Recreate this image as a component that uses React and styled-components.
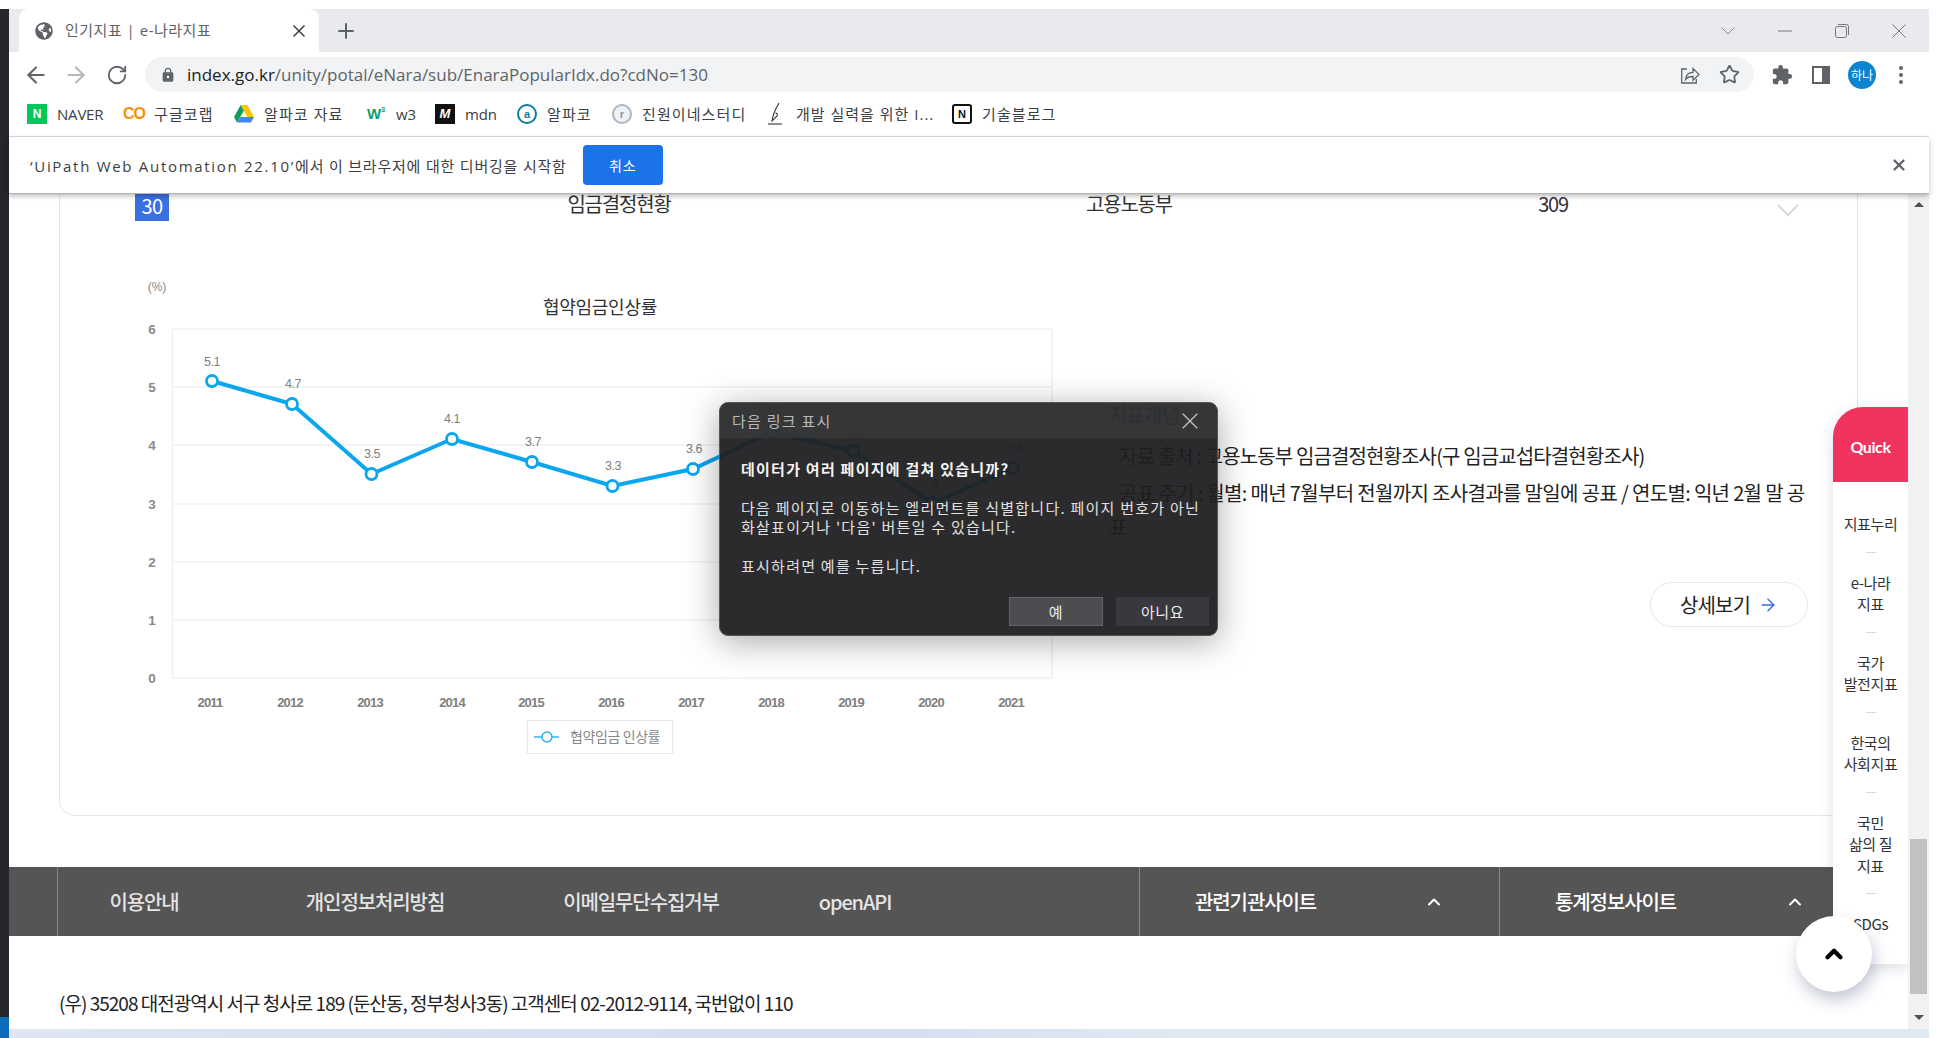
import React from "react";
import styled, { createGlobalStyle } from "styled-components";
import { ArrowLeft, ArrowRight, RotateCw, Star, Plus, X, ChevronUp } from "lucide-react";
import { FaGlobeAmericas } from "react-icons/fa";
import { MdExtension, MdLock } from "react-icons/md";

const GlobalStyle = createGlobalStyle`
  html, body { margin: 0; padding: 0; background: #fff; }
  * { box-sizing: border-box; }
  body { font-family: "Noto Sans", "Noto Sans CJK KR", sans-serif; }
`;

const UI_FONT = `"Open Sans", "Noto Sans CJK KR", sans-serif`;
const PAGE_FONT = `"Noto Sans CJK KR", sans-serif`;

const Screen = styled.div`
  position: relative;
  width: 1938px;
  height: 1038px;
  overflow: hidden;
  background: #fff;
  display: grid;
  grid-template-columns: 9px 1920px 9px;
  padding-top: 9px;
`;

const DesktopEdge = styled.div`
  display: flex;
  flex-direction: column;
  justify-content: flex-end;
  background: #25262a;
  & > div {
    height: 21px;
    background: #0f6cbd;
  }
`;

const Browser = styled.div`
  display: flex;
  flex-direction: column;
  height: 1029px;
`;

const TabStrip = styled.div`
  height: 43px;
  flex: none;
  background: #e8eaed;
  display: flex;
  align-items: stretch;
  padding-left: 10px;
`;

const Tab = styled.div`
  width: 300px;
  background: #fff;
  border-radius: 9px 9px 0 0;
  display: flex;
  align-items: center;
  padding: 0 10px 0 16px;
  color: #5f6368;
  font: 15px ${UI_FONT};
  letter-spacing: 0.5px;
  & > span {
    flex: 1;
    margin-left: 12px;
    margin-top: -3px;
  }
`;

const NewTab = styled.div`
  width: 54px;
  display: flex;
  align-items: center;
  justify-content: center;
  color: #5f6368;
`;

const WindowControls = styled.div`
  margin-left: auto;
  display: flex;
  align-items: center;
  color: #6f7378;
  padding-right: 23px;
  & > svg { margin-left: 43px; }
`;

const Toolbar = styled.div`
  height: 40px;
  flex: none;
  display: flex;
  align-items: flex-start;
  padding: 5px 0 0 18px;
  background: #fff;
`;

const NavIcon = styled.div`
  width: 18px;
  height: 35px;
  display: flex;
  align-items: center;
  justify-content: center;
  margin-right: ${(p) => p.$gap}px;
  color: ${(p) => p.$color || "#5f6368"};
  & > svg { flex: none; }
`;

const Omnibox = styled.div`
  width: 1609px;
  height: 35px;
  border-radius: 18px;
  background: #f1f3f4;
  display: flex;
  align-items: center;
  padding: 0 14px 0 15px;
  color: #5f6368;
`;

const UrlText = styled.div`
  flex: 1;
  margin-left: 11px;
  font: 17px ${UI_FONT};
  color: #5f6368;
  & > b {
    color: #202124;
    font-weight: 400;
  }
`;

const ToolbarIcons = styled.div`
  display: flex;
  align-items: center;
  height: 35px;
  margin-left: 17px;
  color: #5f6368;
`;

const Avatar = styled.div`
  width: 28px;
  height: 28px;
  border-radius: 50%;
  background: #0b84d1;
  color: #fff;
  font: 12px ${PAGE_FONT};
  display: flex;
  align-items: center;
  justify-content: center;
  margin: 0 23px 0 18px;
`;

const MenuDots = styled.div`
  display: flex;
  flex-direction: column;
  gap: 3px;
  & > i {
    width: 4px;
    height: 4px;
    border-radius: 50%;
    background: #5f6368;
  }
`;

const Bookmarks = styled.div`
  height: 45px;
  flex: none;
  display: flex;
  align-items: center;
  padding: 0 0 1px 18px;
  border-bottom: 1px solid #dadce0;
  background: #fff;
`;

const Bookmark = styled.div`
  display: flex;
  align-items: center;
  width: ${(p) => p.$w}px;
  flex: none;
  color: #3c4043;
  font: 15px ${UI_FONT};
  letter-spacing: ${(p) => p.$spacing ?? 1.1}px;
  white-space: nowrap;
  & > span:last-child {
    margin-left: 10px;
  }
`;

const FavBox = styled.span`
  width: 20px;
  height: 20px;
  flex: none;
  display: flex;
  align-items: center;
  justify-content: center;
  font-family: "Liberation Sans", sans-serif;
  font-weight: 700;
  letter-spacing: ${(p) => (p.$tight ? "-1px" : "0")};
  font-size: ${(p) => p.$size || 13}px;
  font-style: ${(p) => (p.$italic ? "italic" : "normal")};
  color: ${(p) => p.$color || "#fff"};
  background: ${(p) => p.$bg || "transparent"};
  border: ${(p) => (p.$line ? `2px solid ${p.$line}` : "none")};
  border-radius: ${(p) => p.$radius || 0};
  & > sup {
    font-size: 7px;
    margin: -8px 0 0 0;
  }
`;

const Infobar = styled.div`
  height: 57px;
  flex: none;
  display: flex;
  align-items: center;
  background: #fff;
  padding: 0 21px 0 21px;
  position: relative;
  z-index: 3;
  border-bottom: 1px solid #b4b4b4;
  box-shadow: 0 2px 5px rgba(0, 0, 0, 0.28);
  color: #3c4043;
  font: 15px ${UI_FONT};
  letter-spacing: 0.8px;
  & > span > b {
    font-weight: 400;
    letter-spacing: 1.7px;
  }
`;

const CancelButton = styled.div`
  width: 80px;
  height: 40px;
  margin-left: 16px;
  border-radius: 4px;
  background: #1a73e8;
  color: #fff;
  display: flex;
  align-items: center;
  justify-content: center;
  font: 14px ${PAGE_FONT};
`;

const InfobarClose = styled.div`
  margin-left: auto;
  color: #5f6368;
  display: flex;
`;

const Viewport = styled.div`
  height: 835px;
  flex: none;
  display: flex;
`;

const Page = styled.div`
  position: relative;
  width: 1899px;
  flex: none;
  overflow: hidden;
  background: #fff;
  font-family: ${PAGE_FONT};
  color: #222;
`;

const Scrollbar = styled.div`
  width: 21px;
  flex: none;
  background: #f1f1f1;
  display: flex;
  flex-direction: column;
  align-items: center;
  justify-content: space-between;
  padding: 8px 0 9px;
`;

const ScrollArrow = styled.div`
  width: 0;
  height: 0;
  border-left: 5px solid transparent;
  border-right: 5px solid transparent;
  border-${(p) => (p.$up ? "bottom" : "top")}: 5px solid #505050;
`;

const ScrollTrack = styled.div`
  flex: 1;
  width: 100%;
  display: flex;
  justify-content: center;
  align-items: flex-end;
  padding-bottom: 21px;
`;

const ScrollThumb = styled.div`
  width: 17px;
  height: 155px;
  background: #c1c1c1;
`;

const BottomStrip = styled.div`
  height: 9px;
  flex: none;
  background: linear-gradient(90deg, #dde6f2, #d5def0 45%, #dfe9f4 60%, #dfe9f4);
`;

const Card = styled.div`
  margin-left: 50px;
  width: 1799px;
  height: 622px;
  border: 1px solid #e6e6e6;
  border-top: none;
  border-radius: 0 0 16px 16px;
`;

const IndexRow = styled.div`
  height: 27px;
  display: flex;
  align-items: center;
  padding-left: 75px;
  font-size: 20px;
  letter-spacing: -1.2px;
  color: #333;
`;

const RankBadge = styled.div`
  width: 34px;
  height: 27px;
  padding-bottom: 4px;
  background: #3a70e0;
  color: #fff;
  font-size: 20px;
  letter-spacing: -0.5px;
  display: flex;
  align-items: center;
  justify-content: center;
`;

const IndexCell = styled.div`
  width: 300px;
  text-align: center;
  margin-left: ${(p) => p.$gap}px;
  margin-top: -9px;
`;

const RowChevron = styled.svg`
  width: 22px;
  height: 13px;
  flex: none;
  margin-left: 74px;
  margin-top: 5px;
`;

const CardBody = styled.div`
  display: flex;
`;

const ChartSvg = styled.svg`
  width: 1049px;
  height: 560px;
  flex: none;
  display: block;
  font-family: "Liberation Sans", ${PAGE_FONT};
`;

const Concept = styled.div`
  width: 699px;
  flex: none;
  padding-top: 179px;
  display: flex;
  flex-direction: column;
  font-size: 20px;
  color: #222;
`;

const ConceptTitle = styled.div`
  font-size: 20px;
  font-weight: 700;
  letter-spacing: -0.9px;
  line-height: 30px;
  margin-bottom: 9px;
`;

const ConceptLine = styled.p`
  margin: 0 0 3px;
  line-height: 34px;
  text-indent: 10px;
  letter-spacing: ${(p) => p.$spacing}px;
`;

const DetailButton = styled.div`
  align-self: flex-end;
  width: 158px;
  height: 45px;
  margin-top: 35px;
  border: 1px solid #e6e6e6;
  border-radius: 23px;
  display: flex;
  align-items: center;
  justify-content: center;
  gap: 8px;
  font-size: 20px;
  letter-spacing: -0.9px;
  color: #222;
  & > svg { color: #3a70e0; }
`;

const FooterBar = styled.div`
  margin-top: 51px;
  height: 69px;
  background: #555;
  color: #e4e4e4;
  display: flex;
  align-items: stretch;
  font-size: 20px;
  letter-spacing: -1.1px;
  font-weight: 500;
  line-height: 66px;
`;

const FooterStart = styled.div`
  width: 49px;
  border-right: 1px solid #888;
`;

const FooterLink = styled.div`
  width: ${(p) => p.$w}px;
  display: flex;
  align-items: center;
  justify-content: center;
`;

const SiteSelect = styled.div`
  width: ${(p) => p.$w}px;
  flex: none;
  border-left: 1px solid #888;
  display: flex;
  align-items: center;
  justify-content: space-between;
  color: #fff;
  padding: 0 ${(p) => p.$right}px 0 55px;
`;

const FooterNav = styled.div`
  width: 1081px;
  display: flex;
`;

const Address = styled.div`
  margin: 54px 0 0 50px;
  line-height: 26px;
  font-size: 19px;
  letter-spacing: -0.98px;
  color: #222;
`;

const QuickMenu = styled.div`
  position: absolute;
  right: 0;
  top: 213px;
  width: 75px;
  height: 557px;
  background: #fff;
  border-radius: 30px 0 0 0;
  box-shadow: 0 4px 14px rgba(60, 70, 110, 0.18);
  overflow: hidden;
  display: flex;
  flex-direction: column;
  align-items: center;
  font-size: 15px;
  line-height: 21.5px;
  letter-spacing: -0.4px;
  text-align: center;
  color: #333;
`;

const QuickHead = styled.div`
  width: 100%;
  height: 75px;
  flex: none;
  margin-bottom: 31px;
  padding-top: 4px;
  background: #f23360;
  color: #fff;
  font: 700 16px "Lato", sans-serif;
  display: flex;
  align-items: center;
  justify-content: center;
`;

const QuickItem = styled.div`
  white-space: pre-line;
`;

const QuickDash = styled.i`
  width: 10px;
  height: 1px;
  flex: none;
  background: #d8d8d8;
  margin: 17px 0 19px;
`;

const TopButton = styled.div`
  position: absolute;
  left: 1787px;
  top: 722px;
  width: 76px;
  height: 76px;
  border-radius: 50%;
  background: #fff;
  box-shadow: 2px 8px 16px rgba(60, 70, 120, 0.3);
  display: flex;
  align-items: center;
  justify-content: center;
  color: #000;
`;

const Dialog = styled.div`
  position: absolute;
  left: 710px;
  top: 208px;
  width: 499px;
  height: 234px;
  border-radius: 9px;
  overflow: hidden;
  background: rgba(30, 30, 32, 0.94);
  border: 1px solid #55565a;
  box-shadow: 0 6px 34px rgba(0, 0, 0, 0.34);
  color: #eee;
  font: 15px "Noto Sans CJK KR", sans-serif;
  letter-spacing: 1.25px;
  display: flex;
  flex-direction: column;
`;

const DialogTitle = styled.div`
  height: 35px;
  flex: none;
  background: rgba(62, 63, 66, 0.55);
  color: #b9b9b9;
  display: flex;
  align-items: center;
  justify-content: space-between;
  padding: 0 13px 0 12px;
  & > svg { color: #c4c4c4; }
`;

const DialogBody = styled.div`
  flex: 1;
  padding: 21px 0 0 21px;
  line-height: 19.5px;
`;

const DialogHeading = styled.div`
  font-weight: 700;
  color: #f4f4f4;
  margin-bottom: 19px;
`;

const DialogText = styled.div`
  white-space: pre-line;
  color: #e0e0e0;
`;

const DialogButtons = styled.div`
  display: flex;
  justify-content: flex-end;
  gap: 13px;
  padding: 0 8px 9px;
`;

const DialogButton = styled.div`
  width: ${(p) => (p.$primary ? 94 : 93)}px;
  height: 29px;
  background: ${(p) => (p.$primary ? "#4c4d50" : "#38383e")};
  border: ${(p) => (p.$primary ? "1px solid #646568" : "none")};
  color: #ececec;
  letter-spacing: 0.6px;
  display: flex;
  align-items: center;
  justify-content: center;
`;

const values = [
  { year: 2011, value: "5.1", x: 212, y: 381, lx: 212, ly: 362, tx: 210 },
  { year: 2012, value: "4.7", x: 292, y: 404, lx: 293, ly: 384, tx: 290 },
  { year: 2013, value: "3.5", x: 371.5, y: 474, lx: 372, ly: 454, tx: 370 },
  { year: 2014, value: "4.1", x: 452, y: 439, lx: 452, ly: 419, tx: 452 },
  { year: 2015, value: "3.7", x: 532, y: 462, lx: 533, ly: 442, tx: 531 },
  { year: 2016, value: "3.3", x: 612.5, y: 486, lx: 613, ly: 466, tx: 611 },
  { year: 2017, value: "3.6", x: 693, y: 469, lx: 694, ly: 449, tx: 691 },
  { year: 2018, value: "4.2", x: 772, y: 432, lx: 773, ly: 412, tx: 771 },
  { year: 2019, value: "3.9", x: 853, y: 451, lx: 854, ly: 432, tx: 851 },
  { year: 2020, value: "3", x: 932, y: 503, lx: 935, ly: 484, tx: 931 },
  { year: 2021, value: "3.6", x: 1013, y: 468, lx: 1015, ly: 449, tx: 1011 },
];

const gridLines = [
  { label: 6, y: 329 },
  { label: 5, y: 387 },
  { label: 4, y: 445 },
  { label: 3, y: 504 },
  { label: 2, y: 562 },
  { label: 1, y: 620 },
  { label: 0, y: 678 },
];

const quickItems = ["지표누리", "e-나라\n지표", "국가\n발전지표", "한국의\n사회지표", "국민\n삶의 질\n지표", "SDGs"];

const WageChart = () => (
  <ChartSvg viewBox="60 221 1049 560">
    <text x="157" y="291" fontSize="12" fill="#888" textAnchor="middle">(%)</text>
    <text x="600" y="314" fontSize="18" fill="#333" textAnchor="middle" fontFamily="Noto Sans CJK KR" letterSpacing="-0.3">협약임금인상률</text>
    <line x1="172.5" y1="329" x2="172.5" y2="678" stroke="#efefef" strokeWidth="1.5" />
    <line x1="1052" y1="329" x2="1052" y2="678" stroke="#efefef" strokeWidth="1.5" />
    {gridLines.map((g) => (
      <g key={g.label}>
        <line x1="172" y1={g.y} x2="1052" y2={g.y} stroke="#f1f1f1" strokeWidth="1.5" />
        <text x="152" y={g.y + 5} fontSize="13.5" fontWeight="700" fill="#8a8a8a" textAnchor="middle">{g.label}</text>
      </g>
    ))}
    <polyline
      points={values.map((v) => `${v.x},${v.y}`).join(" ")}
      fill="none"
      stroke="#0ba6ee"
      strokeWidth="4"
    />
    {values.map((v) => (
      <g key={v.year}>
        <circle cx={v.x} cy={v.y} r="5.5" fill="#fff" stroke="#0ba6ee" strokeWidth="2.8" />
        <text x={v.lx} y={v.ly + 4} fontSize="12.5" fill="#808080" textAnchor="middle" letterSpacing="-0.4">{v.value}</text>
        <text x={v.tx} y="707" fontSize="13" fontWeight="700" fill="#808080" textAnchor="middle" letterSpacing="-0.8">{v.year}</text>
      </g>
    ))}
    <rect x="527.5" y="720.5" width="145" height="33" fill="#fff" stroke="#e8e8e8" />
    <line x1="534" y1="737" x2="559" y2="737" stroke="#2eb4f2" strokeWidth="1.5" />
    <circle cx="547" cy="737" r="5" fill="#fff" stroke="#2eb4f2" strokeWidth="1.6" />
    <text x="570" y="742" fontSize="14" fill="#888" fontFamily="Noto Sans CJK KR" letterSpacing="-0.4">협약임금 인상률</text>
  </ChartSvg>
);

const ShareIcon = () => (
  <svg width="20" height="20" viewBox="0 0 20 20" fill="none" stroke="#5f6368" strokeWidth="1.3">
    <path d="M7 4H1.7v14h14.6v-4" />
    <path d="M5.5 14.5c.4-4 3.2-7 7.5-7.2V3.6l6 5.8-6 5.8v-3.700c-3 0-5.700.6-7.500 3z" />
  </svg>
);

const SidePanelIcon = () => (
  <svg width="18" height="18" viewBox="0 0 18 18">
    <path fill="#5f6368" fillRule="evenodd" d="M0 0h18v18H0zM2 2v14h8V2z" />
  </svg>
);

const DriveIcon = () => (
  <svg width="20" height="18" viewBox="0 0 20 18">
    <path fill="#0f9d58" d="M6.700 0L0 12l3 5.500L10 5.400z" />
    <path fill="#ffc107" d="M6.700 0h6.600L20 12h-6.700z" />
    <path fill="#4285f4" d="M3 17.500h14l3-5.500H6.500z" />
  </svg>
);

const PenIcon = () => (
  <svg width="20" height="24" viewBox="0 0 20 24" fill="none" stroke="#333" strokeWidth="1.1">
    <path d="M13 1C10 6 7 12 6 19l5-5c1-2 0-3-1.500-3" />
    <path d="M2 22h14" />
  </svg>
);

const App = () => (
  <>
    <GlobalStyle />
    <Screen>
      <DesktopEdge><div /></DesktopEdge>
      <Browser>
        <TabStrip>
          <Tab>
            <FaGlobeAmericas size={18} color="#5f6368" />
            <span>인기지표 | e-나라지표</span>
            <X size={20} strokeWidth={2} color="#444" />
          </Tab>
          <NewTab><Plus size={24} strokeWidth={2} /></NewTab>
          <WindowControls>
            <svg width="14" height="8" viewBox="0 0 14 8" fill="none" stroke="#888" strokeWidth="1"><path d="M.5.500 7 7 13.500.500" /></svg>
            <svg width="14" height="2" viewBox="0 0 14 2" stroke="#777" strokeWidth="1"><path d="M0 1h14" /></svg>
            <svg width="14" height="14" viewBox="0 0 14 14" fill="none" stroke="#777" strokeWidth="1"><rect x=".5" y="2.500" width="11" height="11" rx="2" /><path d="M3 .5h8.500a2 2 0 0 1 2 2V11" /></svg>
            <svg width="14" height="14" viewBox="0 0 14 14" stroke="#777" strokeWidth="1"><path d="M.5.500l13 13M13.500.500l-13 13" /></svg>
          </WindowControls>
        </TabStrip>
        <Toolbar>
          <NavIcon $gap={22}><ArrowLeft size={26} strokeWidth={1.9} /></NavIcon>
          <NavIcon $gap={23} $color="#b4b7bb"><ArrowRight size={26} strokeWidth={1.9} /></NavIcon>
          <NavIcon $gap={19}><RotateCw size={22} strokeWidth={2} /></NavIcon>
          <Omnibox>
            <MdLock size={16} />
            <UrlText><b>index.go.kr</b>/unity/potal/eNara/sub/EnaraPopularIdx.do?cdNo=130</UrlText>
            <ShareIcon />
            <Star size={21} strokeWidth={2} style={{ marginLeft: 19 }} />
          </Omnibox>
          <ToolbarIcons>
            <MdExtension size={22} style={{ marginRight: 19 }} />
            <SidePanelIcon />
            <Avatar>하나</Avatar>
            <MenuDots><i /><i /><i /></MenuDots>
          </ToolbarIcons>
        </Toolbar>
        <Bookmarks>
          <Bookmark $w={97} $spacing={-0.2}><FavBox $bg="#03c75a" $size={12}>N</FavBox><span>NAVER</span></Bookmark>
          <Bookmark $w={110}><FavBox $color="#f79009" $size={16} $tight>CO</FavBox><span>구글코랩</span></Bookmark>
          <Bookmark $w={132}><FavBox><DriveIcon /></FavBox><span>알파코 자료</span></Bookmark>
          <Bookmark $w={69} $spacing={-0.2}><FavBox $color="#0aa06e" $size={15}>W<sup>3</sup></FavBox><span>w3</span></Bookmark>
          <Bookmark $w={82} $spacing={-0.2}><FavBox $bg="#111" $italic $size={13}>M</FavBox><span>mdn</span></Bookmark>
          <Bookmark $w={95}><FavBox $bg="#fff" $line="#0d7d9c" $color="#0d7d9c" $radius="50%" $size={11}>a</FavBox><span>알파코</span></Bookmark>
          <Bookmark $w={154}><FavBox $bg="#eef2f5" $line="#a9b6c2" $color="#8a98a5" $radius="50%" $size={11}>r</FavBox><span>진원이네스터디</span></Bookmark>
          <Bookmark $w={186} $spacing={1}><FavBox><PenIcon /></FavBox><span>개발 실력을 위한 I...</span></Bookmark>
          <Bookmark $w={120}><FavBox $bg="#fff" $line="#111" $color="#111" $radius="3px" $size={11}>N</FavBox><span>기술블로그</span></Bookmark>
        </Bookmarks>
        <Infobar>
          <span><b>‘UiPath Web Automation 22.10’</b>에서 이 브라우저에 대한 디버깅을 시작함</span>
          <CancelButton>취소</CancelButton>
          <InfobarClose><X size={18} strokeWidth={3} /></InfobarClose>
        </Infobar>
        <Viewport>
          <Page>
            <Card>
              <IndexRow>
                <RankBadge>30</RankBadge>
                <IndexCell $gap={300}>임금결정현황</IndexCell>
                <IndexCell $gap={210}>고용노동부</IndexCell>
                <IndexCell $gap={124}>309</IndexCell>
                <RowChevron viewBox="0 0 22 13" fill="none" stroke="#cfcfcf" strokeWidth="1.6">
                  <path d="M1 1l10 10L21 1" />
                </RowChevron>
              </IndexRow>
              <CardBody>
                <WageChart />
                <Concept>
                  <ConceptTitle>지표개념</ConceptTitle>
                  <ConceptLine $spacing={-0.87}>자료 출처 : 고용노동부 임금결정현황조사(구 임금교섭타결현황조사)</ConceptLine>
                  <ConceptLine $spacing={-0.66}>공표 주기 : 월별: 매년 7월부터 전월까지 조사결과를 말일에 공표 / 연도별: 익년 2월 말 공표</ConceptLine>
                  <DetailButton>상세보기<ArrowRight size={20} strokeWidth={1.8} /></DetailButton>
                </Concept>
              </CardBody>
            </Card>
            <FooterBar>
              <FooterStart />
              <FooterNav>
                <FooterLink $w={172}>이용안내</FooterLink>
                <FooterLink $w={290}>개인정보처리방침</FooterLink>
                <FooterLink $w={242}>이메일무단수집거부</FooterLink>
                <FooterLink $w={186}>openAPI</FooterLink>
              </FooterNav>
              <SiteSelect $w={360} $right={55}>관련기관사이트<ChevronUp size={20} strokeWidth={2.4} /></SiteSelect>
              <SiteSelect $w={409} $right={103}>통계정보사이트<ChevronUp size={20} strokeWidth={2.4} /></SiteSelect>
            </FooterBar>
            <Address>(우) 35208 대전광역시 서구 청사로 189 (둔산동, 정부청사3동) 고객센터 02-2012-9114, 국번없이 110</Address>
            <QuickMenu>
              <QuickHead>Quick</QuickHead>
              {quickItems.map((item, index) => (
                <React.Fragment key={item}>
                  {index > 0 && <QuickDash />}
                  <QuickItem>{item}</QuickItem>
                </React.Fragment>
              ))}
            </QuickMenu>
            <TopButton><ChevronUp size={26} strokeWidth={4} /></TopButton>
            <Dialog>
              <DialogTitle>다음 링크 표시<X size={28} strokeWidth={1} /></DialogTitle>
              <DialogBody>
                <DialogHeading>데이터가 여러 페이지에 걸쳐 있습니까?</DialogHeading>
                <DialogText>{"다음 페이지로 이동하는 엘리먼트를 식별합니다. 페이지 번호가 아닌\n화살표이거나 '다음' 버튼일 수 있습니다.\n\n표시하려면 예를 누릅니다."}</DialogText>
              </DialogBody>
              <DialogButtons>
                <DialogButton $primary>예</DialogButton>
                <DialogButton>아니요</DialogButton>
              </DialogButtons>
            </Dialog>
          </Page>
          <Scrollbar>
            <ScrollArrow $up />
            <ScrollTrack><ScrollThumb /></ScrollTrack>
            <ScrollArrow />
          </Scrollbar>
        </Viewport>
        <BottomStrip />
      </Browser>
    </Screen>
  </>
);

export default App;
